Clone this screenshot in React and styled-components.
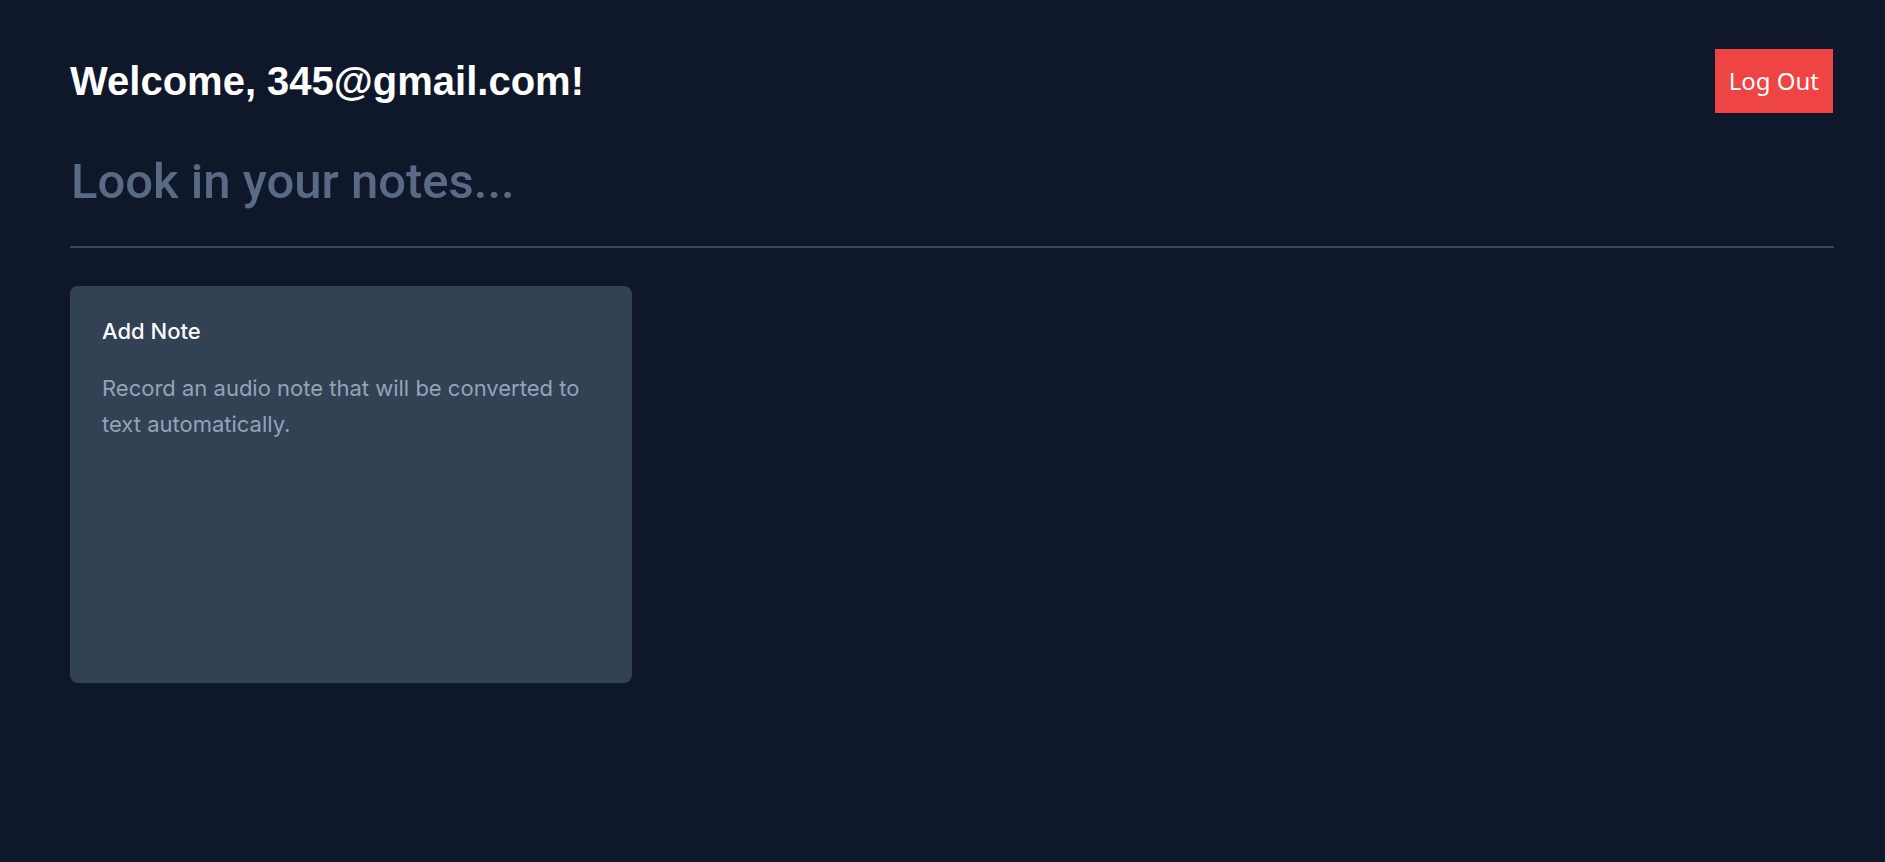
import React from "react";
import styled, { createGlobalStyle } from "styled-components";

const GlobalStyle = createGlobalStyle`
  html, body {
    margin: 0;
    padding: 0;
    background: #0f172a;
    font-family: Inter, "Noto Sans", sans-serif;
  }
  * { box-sizing: border-box; }
`;

const Page = styled.main`
  min-height: 100vh;
  background: #0f172a;
  padding: 49px 52px 48px 70px;
  color: #ffffff;
`;

const Header = styled.header`
  display: flex;
  align-items: center;
  justify-content: space-between;
  height: 64px;
`;

const Title = styled.h1`
  margin: 0;
  font-family: "Liberation Sans", Arial, sans-serif;
  font-size: 40px;
  line-height: 46px;
  font-weight: 700;
  color: #ffffff;
`;

const LogoutButton = styled.button`
  height: 64px;
  background: #ef4444;
  color: #ffffff;
  border: none;
  border-radius: 0;
  font-family: "Noto Sans", sans-serif;
  font-size: 24px;
  line-height: 32px;
  padding: 0 14px;
  cursor: pointer;
`;

const SearchInput = styled.input`
  display: block;
  width: 100%;
  box-sizing: content-box;
  margin: 36px 0 0;
  height: 66px;
  padding: 0 0 31px 1px;
  border: none;
  border-bottom: 2px solid #3b4657;
  background: transparent;
  outline: none;
  font-family: Roboto, sans-serif;
  font-size: 49px;
  line-height: 66px;
  font-weight: 500;
  color: #e2e8f0;
  &::placeholder {
    color: #5a6a85;
  }
`;

const Grid = styled.section`
  display: grid;
  grid-template-columns: repeat(auto-fill, 562px);
  gap: 24px;
  margin-top: 38px;
`;

const Card = styled.article`
  background: #334155;
  border-radius: 8px;
  height: 397px;
  padding: 31px 32px;
`;

const CardTitle = styled.h2`
  margin: 0;
  font-size: 22px;
  line-height: 28px;
  font-weight: 500;
  color: #f8fafc;
`;

const CardText = styled.p`
  margin: 25px 0 0;
  font-size: 22px;
  line-height: 36px;
  color: #94a3b8;
`;

export default function App() {
  return (
    <>
      <GlobalStyle />
      <Page>
        <Header>
          <Title>Welcome, 345@gmail.com!</Title>
          <LogoutButton>Log Out</LogoutButton>
        </Header>
        <SearchInput placeholder="Look in your notes..." />
        <Grid>
          <Card>
            <CardTitle>Add Note</CardTitle>
            <CardText>
              Record an audio note that will be converted to text automatically.
            </CardText>
          </Card>
        </Grid>
      </Page>
    </>
  );
}
